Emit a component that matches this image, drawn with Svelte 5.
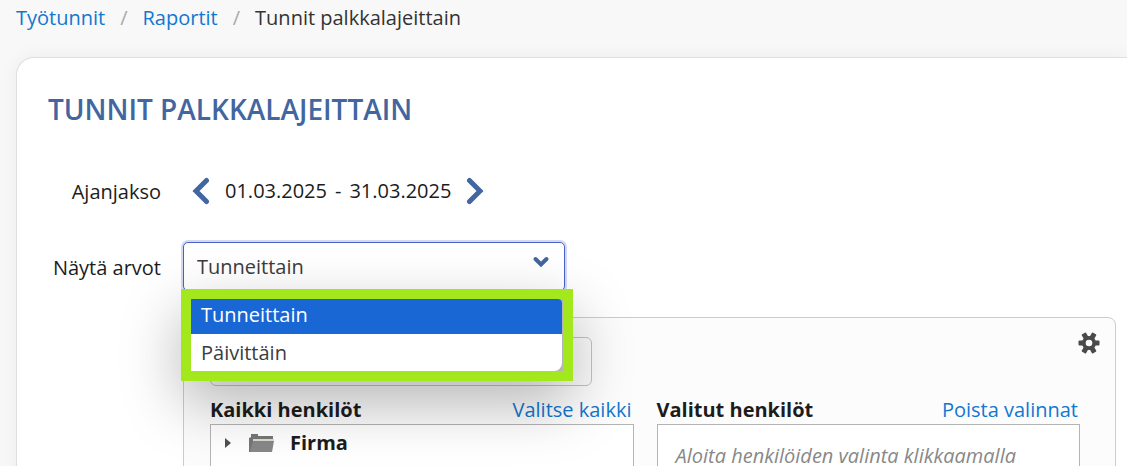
<script>
  const options = ['Tunneittain', 'Päivittäin'];

  let selected = $state('Tunneittain');
  let open = $state(true);

  function choose(option) {
    selected = option;
    open = false;
  }
</script>

<div class="page">
  <nav class="breadcrumb" aria-label="Murupolku">
    <a href="#tyotunnit">Työtunnit</a>
    <span class="separator">/</span>
    <a href="#raportit">Raportit</a>
    <span class="separator">/</span>
    <span>Tunnit palkkalajeittain</span>
  </nav>

  <main class="card">
    <h1>TUNNIT PALKKALAJEITTAIN</h1>

    <div class="row period">
      <span class="label">Ajanjakso</span>
      <div class="period-picker">
        <button class="arrow" aria-label="Edellinen">
          <svg width="18" height="28" viewBox="0 0 18 28">
            <path d="M14.5 3.5 L4 14 L14.5 24.5" />
          </svg>
        </button>
        <span class="dates"><span>01.03.2025</span><span>-</span><span>31.03.2025</span></span>
        <button class="arrow" aria-label="Seuraava">
          <svg width="18" height="28" viewBox="0 0 18 28">
            <path d="M3.5 3.5 L14 14 L3.5 24.5" />
          </svg>
        </button>
      </div>
    </div>

    <div class="row values">
      <label class="label" for="values">Näytä arvot</label>
      <div class="dropdown">
        <select
          id="values"
          bind:value={selected}
          onmousedown={(e) => { e.preventDefault(); open = !open; }}
        >
          {#each options as option}
            <option value={option}>{option}</option>
          {/each}
        </select>
        <svg class="chevron" width="18" height="14" viewBox="0 0 18 14">
          <path d="M3.5 4 L9 9.5 L14.5 4" />
        </svg>
        {#if open}
          <div class="menu">
            <div class="menu-list" role="listbox" aria-label="Näytä arvot">
              {#each options as option}
                <button
                  role="option"
                  class:active={option === selected}
                  aria-selected={option === selected}
                  onclick={() => choose(option)}
                >
                  {option}
                </button>
              {/each}
            </div>
          </div>
        {/if}
      </div>
    </div>

    <section class="people">
      <div class="people-top">
        <input class="search" type="text" aria-label="Hae henkilöitä" />
        <button class="settings" aria-label="Asetukset">
          <svg width="22" height="22" viewBox="0 0 22 22">
            <g fill="#4a4a4a">
              <circle cx="11" cy="11" r="7" />
              <rect x="0.5" y="8.5" width="21" height="5" rx="1" />
              <rect x="0" y="8.5" width="22" height="5" rx="1" transform="rotate(60 11 11)" />
              <rect x="0" y="8.5" width="22" height="5" rx="1" transform="rotate(120 11 11)" />
            </g>
            <circle cx="11" cy="11" r="3.3" fill="#fcfcfc" />
          </svg>
        </button>
      </div>

      <div class="columns">
        <div class="column">
          <div class="column-head">
            <h2>Kaikki henkilöt</h2>
            <a href="#valitse">Valitse kaikki</a>
          </div>
          <div class="list">
            <button class="tree-node" aria-expanded="false">
              <svg width="8" height="10" viewBox="0 0 8 10">
                <path d="M1 0 L7 5 L1 10 Z" fill="#505050" />
              </svg>
              <svg class="folder" width="26" height="20" viewBox="0 0 26 20">
                <path d="M0 19 V5 L2 4 V1 H9 V3 H24 V7 L22 19 Z" fill="#777" />
                <path d="M4 6 H25 V8 H4 Z" fill="#dcdad2" />
                <path d="M1 19 L4 8 H25 L23 19 Z" fill="#888" />
              </svg>
              <span>Firma</span>
            </button>
          </div>
        </div>

        <div class="column">
          <div class="column-head">
            <h2>Valitut henkilöt</h2>
            <a href="#poista">Poista valinnat</a>
          </div>
          <div class="list">
            <p class="hint">Aloita henkilöiden valinta klikkaamalla</p>
          </div>
        </div>
      </div>
    </section>
  </main>
</div>

<style>
  :global(body) {
    margin: 0;
    background: #f8f8f8;
  }

  .page {
    box-sizing: border-box;
    height: 100vh;
    padding-left: 16px;
    overflow: hidden;
    font-family: 'Open Sans', 'Noto Sans', sans-serif;
    font-size: 20px;
    line-height: 28px;
    color: #1c1c1c;
  }

  button,
  input,
  select {
    font: inherit;
    color: inherit;
  }

  button {
    padding: 0;
    border: 0;
    background: none;
    cursor: pointer;
  }

  svg {
    display: block;
  }

  a {
    color: #1177d1;
    text-decoration: none;
  }

  .breadcrumb {
    display: flex;
    gap: 15px;
    padding: 4px 0 25px;
    color: #333;
  }

  .separator {
    color: #aaa;
  }

  .card {
    min-height: 100vh;
    padding: 32px 11px 0 31px;
    border: 1px solid #dfdfdf;
    border-right: 0;
    border-radius: 18px 0 0 0;
    background: #fff;
    box-shadow: 0 0 20px rgba(0, 0, 0, 0.05);
  }

  h1 {
    margin: 0;
    font-size: 28px;
    line-height: 38px;
    font-weight: 600;
    color: #42669f;
  }

  .row {
    display: flex;
    align-items: center;
    gap: 22px;
  }

  .label {
    flex: none;
    width: 113px;
    padding-top: 2px;
    text-align: right;
  }

  .period {
    margin-top: 48px;
  }

  .period-picker {
    display: flex;
    align-items: center;
    gap: 15px;
    padding-left: 9px;
  }

  .dates {
    display: flex;
    gap: 8px;
  }

  .arrow path,
  .chevron path {
    fill: none;
    stroke: #42669f;
    stroke-width: 5;
    stroke-linecap: round;
  }

  .values {
    margin-top: 36px;
  }

  .dropdown {
    position: relative;
    width: 382px;
  }

  select {
    display: block;
    box-sizing: border-box;
    width: 100%;
    height: 49px;
    padding: 0 48px 0 13px;
    border: 1px solid #4862c8;
    border-radius: 5px;
    outline: 0;
    appearance: none;
    background: #fff;
    color: #3c3c3c;
    box-shadow: 0 0 0 2px #d3d9f2;
  }

  .chevron {
    position: absolute;
    top: 13px;
    right: 15px;
    pointer-events: none;
  }

  .chevron path {
    stroke-width: 4;
  }

  .menu {
    position: absolute;
    z-index: 2;
    top: 47px;
    left: -2px;
    right: -8px;
    border: 10px solid #a3e81c;
    background: #b4b4b4;
    box-shadow: 0 22px 60px rgba(0, 0, 0, 0.28);
  }

  .menu-list {
    overflow: hidden;
    margin-right: 1px;
    border-radius: 0 4px 8px 0;
    background: #fff;
  }

  .menu-list button {
    display: block;
    width: 100%;
    height: 37px;
    padding-left: 10px;
    text-align: left;
    color: #3c3c3c;
  }

  .menu-list .active {
    height: 35px;
    padding-bottom: 4px;
    background: #1966d5;
    color: #fff;
  }

  .people {
    margin: 26px 0 0 135px;
    padding: 19px 35px 0 26px;
    border: 1px solid #ccc;
    border-radius: 8px;
    background: #fcfcfc;
  }

  .people-top {
    display: flex;
    justify-content: space-between;
    align-items: flex-start;
  }

  .search {
    box-sizing: border-box;
    width: 382px;
    height: 49px;
    border: 1px solid #c4c4c4;
    border-radius: 6px;
    background: #fcfcfc;
  }

  .settings {
    margin: -5px -20px 0 0;
  }

  .columns {
    display: flex;
    gap: 23px;
    margin-top: 10px;
  }

  .column {
    flex: 1;
  }

  .column-head {
    display: flex;
    justify-content: space-between;
    padding-right: 2px;
  }

  h2 {
    margin: 0;
    font-size: 20px;
    font-weight: 700;
  }

  .list {
    height: 240px;
    border: 1px solid #b4b4b4;
    background: #fff;
  }

  .tree-node {
    display: flex;
    align-items: center;
    padding: 4px 0 0 13px;
    font-weight: 700;
  }

  .folder {
    margin: 0 15px 0 17px;
  }

  .hint {
    margin: 21px 18px;
    line-height: 20px;
    font-style: italic;
    color: #888;
    white-space: nowrap;
  }
</style>
